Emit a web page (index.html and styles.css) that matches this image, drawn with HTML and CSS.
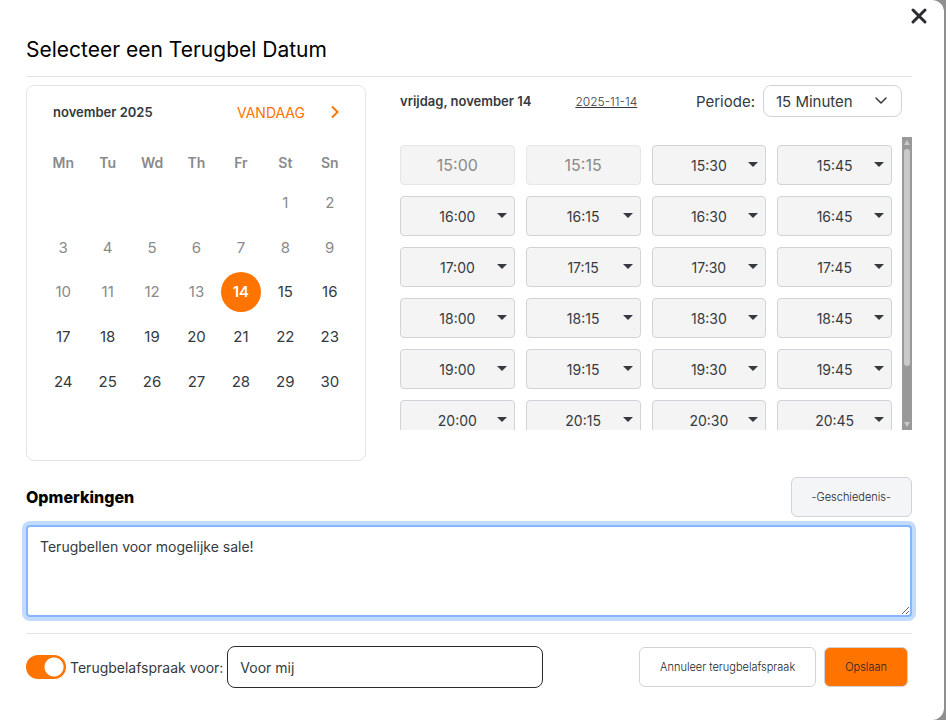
FILE: index.html
```
<!DOCTYPE html>
<html lang="nl">
<head>
    <meta charset="UTF-8">
    <meta name="viewport" content="width=device-width, initial-scale=1.0">
    <title>Terugbelafspraak</title>
    <link rel="stylesheet" href="styles.css">
</head>
<body>
    <div class="modal" role="dialog" aria-labelledby="modalTitle">
        <button type="button" class="close-btn" aria-label="Sluiten">
            <svg width="18" height="18" viewBox="0 0 18 18"><path d="M3 3l12 12M15 3L3 15" stroke="#2b2c30" stroke-width="3" stroke-linecap="round"/></svg>
        </button>
        <h1 class="modal-title" id="modalTitle">Selecteer een Terugbel Datum</h1>

        <div class="planner">
            <div class="calendar">
                <div class="calendar-header">
                    <span class="month">november 2025</span>
                    <button type="button" class="today-btn">VANDAAG</button>
                    <button type="button" class="next-btn" aria-label="Volgende maand">
                        <svg width="10" height="14" viewBox="0 0 10 14"><path d="M2 1.5L7.5 7L2 12.5" fill="none" stroke="#ff7300" stroke-width="2"/></svg>
                    </button>
                </div>
                <table class="days">
                    <thead>
                        <tr><th>Mn</th><th>Tu</th><th>Wd</th><th>Th</th><th>Fr</th><th>St</th><th>Sn</th></tr>
                    </thead>
                    <tbody>
                        <tr class="past"><td></td><td></td><td></td><td></td><td></td><td>1</td><td>2</td></tr>
                        <tr class="past"><td>3</td><td>4</td><td>5</td><td>6</td><td>7</td><td>8</td><td>9</td></tr>
                        <tr><td class="past">10</td><td class="past">11</td><td class="past">12</td><td class="past">13</td><td><span class="selected">14</span></td><td>15</td><td>16</td></tr>
                        <tr><td>17</td><td>18</td><td>19</td><td>20</td><td>21</td><td>22</td><td>23</td></tr>
                        <tr><td>24</td><td>25</td><td>26</td><td>27</td><td>28</td><td>29</td><td>30</td></tr>
                    </tbody>
                </table>
            </div>

            <div class="times">
                <div class="times-header">
                    <span class="chosen-day">vrijdag, november 14</span>
                    <a href="#" class="iso-date">2025-11-14</a>
                    <label for="period">Periode:</label>
                    <div class="select-wrap">
                        <select id="period">
                            <option>15 Minuten</option>
                            <option>30 Minuten</option>
                            <option>60 Minuten</option>
                        </select>
                        <svg class="select-arrow" width="12" height="8" viewBox="0 0 12 8"><path d="M1 1l5 5 5-5" fill="none" stroke="#343a40" stroke-width="1.5" stroke-linecap="round" stroke-linejoin="round"/></svg>
                    </div>
                </div>
                <div class="slots-area">
                    <div class="slots">
                        <button type="button" class="slot" disabled>15:00</button>
                        <button type="button" class="slot" disabled>15:15</button>
                        <button type="button" class="slot">15:30</button>
                        <button type="button" class="slot">15:45</button>
                        <button type="button" class="slot">16:00</button>
                        <button type="button" class="slot">16:15</button>
                        <button type="button" class="slot">16:30</button>
                        <button type="button" class="slot">16:45</button>
                        <button type="button" class="slot">17:00</button>
                        <button type="button" class="slot">17:15</button>
                        <button type="button" class="slot">17:30</button>
                        <button type="button" class="slot">17:45</button>
                        <button type="button" class="slot">18:00</button>
                        <button type="button" class="slot">18:15</button>
                        <button type="button" class="slot">18:30</button>
                        <button type="button" class="slot">18:45</button>
                        <button type="button" class="slot">19:00</button>
                        <button type="button" class="slot">19:15</button>
                        <button type="button" class="slot">19:30</button>
                        <button type="button" class="slot">19:45</button>
                        <button type="button" class="slot">20:00</button>
                        <button type="button" class="slot">20:15</button>
                        <button type="button" class="slot">20:30</button>
                        <button type="button" class="slot">20:45</button>
                    </div>
                    <div class="scrollbar">
                        <svg width="10" height="12" viewBox="0 0 10 12"><path d="M5 3L8 8H2z" fill="#c9c9c9"/></svg>
                        <div class="scroll-thumb"></div>
                        <svg width="10" height="12" viewBox="0 0 10 12"><path d="M5 9L8 4H2z" fill="#c9c9c9"/></svg>
                    </div>
                </div>
            </div>
        </div>

        <div class="notes-header">
            <label for="notes">Opmerkingen</label>
            <button type="button" class="btn btn-light">-Geschiedenis-</button>
        </div>
        <textarea id="notes" class="notes">Terugbellen voor mogelijke sale!</textarea>

        <div class="footer">
            <input type="checkbox" class="switch" id="callback" checked>
            <label for="callback">Terugbelafspraak voor:</label>
            <input type="text" class="owner" value="Voor mij" aria-label="Voor wie">
            <button type="button" class="btn">Annuleer terugbelafspraak</button>
            <button type="button" class="btn btn-primary">Opslaan</button>
        </div>
    </div>
</body>
</html>
```
FILE: styles.css
```
* {
    box-sizing: border-box;
}

body {
    margin: 0;
    background-color: #8f8f8f;
    font-family: Inter, "Liberation Sans", sans-serif;
    font-size: 15px;
    color: #343a40;
}

button,
input,
select,
textarea {
    font-family: inherit;
    color: inherit;
}

button {
    cursor: pointer;
}

.modal {
    position: relative;
    min-height: 100vh;
    margin-right: 2px;
    padding: 32px 32px 32px 26px;
    background-color: white;
    border-radius: 0 12px 12px 0;
}

.close-btn {
    position: absolute;
    top: 7px;
    right: 16px;
    padding: 0;
    border: none;
    background: none;
    line-height: 0;
}

.modal-title {
    margin: 0 0 8px;
    padding-bottom: 8px;
    border-bottom: 1px solid #e2e4e8;
    font-size: 21px;
    font-weight: 400;
    line-height: 36px;
    color: black;
}

.planner {
    display: grid;
    grid-template-columns: 340px 1fr;
    gap: 34px;
}

.calendar {
    height: 376px;
    padding: 14px 13px 14px 14px;
    border: 1px solid #e2e4e8;
    border-radius: 8px;
}

.calendar-header {
    display: flex;
    align-items: center;
    height: 24px;
    padding: 0 12px;
}

.month {
    flex: 1;
    font-size: 13px;
    font-weight: 600;
}

.today-btn,
.next-btn {
    padding: 0;
    border: none;
    background: none;
    font-size: 14px;
    color: #ff7300;
}

.next-btn {
    margin-left: 25px;
    line-height: 0;
}

.days {
    width: 100%;
    height: 260px;
    margin-top: 20px;
    border-collapse: collapse;
    table-layout: fixed;
    text-align: center;
}

.days th {
    height: 36px;
    padding: 0;
    font-size: 14px;
    font-weight: 600;
    color: #8a8a8a;
}

.days td {
    height: 44px;
    padding: 0;
}

.days .past {
    color: #8a8a8a;
}

.selected {
    display: block;
    width: 40px;
    margin: 0 auto;
    border-radius: 50%;
    background-color: #ff7300;
    line-height: 40px;
    font-weight: 600;
    color: white;
}

.times-header {
    display: flex;
    align-items: center;
    height: 32px;
    margin-bottom: 20px;
    padding-right: 10px;
}

.chosen-day {
    font-size: 13px;
    font-weight: 600;
}

.iso-date {
    margin: 0 auto 0 44px;
    font-size: 12px;
    font-weight: 300;
    color: inherit;
}

.select-wrap {
    position: relative;
    margin-left: 8px;
}

.select-wrap select {
    width: 139px;
    height: 32px;
    padding: 0 12px;
    border: 1px solid #ced4da;
    border-radius: 8px;
    background-color: white;
    font-size: 15px;
    appearance: none;
}

.select-arrow {
    position: absolute;
    top: 12px;
    right: 15px;
    pointer-events: none;
}

.slots-area {
    display: flex;
    gap: 10px;
    height: 293px;
}

.slots {
    display: grid;
    flex: 1;
    grid-template-columns: repeat(4, 1fr);
    grid-auto-rows: 40px;
    gap: 11px;
    padding-top: 8px;
    overflow: hidden;
}

.slot {
    position: relative;
    padding: 0;
    border: 1px solid #ced4da;
    border-radius: 4px;
    background-color: #f4f4f4;
    font-size: 14px;
}

.slot:disabled {
    border-color: #e4e6e8;
    font-size: 16px;
    color: #8a8a8a;
}

/* dropdown caret */
.slot:not(:disabled)::after {
    content: "";
    position: absolute;
    top: 16px;
    right: 7px;
    border: 5px solid transparent;
    border-top-color: #343a40;
    border-bottom: none;
}

.scrollbar {
    display: flex;
    flex-direction: column;
    justify-content: space-between;
    width: 10px;
    background-color: #999;
}

.scroll-thumb {
    flex: 1;
    margin: 0 2px 52px;
    border-radius: 3px;
    background-color: #c9c9c9;
}

.notes-header {
    display: flex;
    align-items: center;
    justify-content: space-between;
    margin: 16px 0 8px;
    font-size: 16px;
    font-weight: 800;
    color: black;
}

.btn {
    height: 40px;
    padding: 0 20px;
    border: 1px solid #ced4da;
    border-radius: 6px;
    background-color: white;
    font-size: 11px;
    font-weight: 300;
    color: #212529;
}

.btn-light {
    background-color: #f4f5f7;
}

.btn-primary {
    background-color: #ff7300;
}

.notes {
    display: block;
    width: 100%;
    height: 92px;
    padding: 10px 12px;
    border: 2px solid #86b7fe;
    border-radius: 4px;
    outline: none;
    box-shadow: 0 0 0 4px #c2dbfe;
    font-size: 14px;
    line-height: 20px;
}

.footer {
    display: flex;
    align-items: center;
    gap: 4px;
    margin-top: 16px;
    padding: 12px 4px 0 0;
    border-top: 1px solid #e2e4e8;
    font-size: 14px;
}

.switch {
    width: 40px;
    height: 24px;
    margin: 0;
    border-radius: 12px;
    background: #ff7300 radial-gradient(circle at 28px 12px, white 9px, transparent 10px);
    appearance: none;
}

.owner {
    width: 316px;
    height: 42px;
    padding: 0 12px;
    border: 1px solid #2b2c30;
    border-radius: 8px;
    font-size: 14px;
}

.owner + .btn {
    margin: 0 4px 0 auto;
}
```
